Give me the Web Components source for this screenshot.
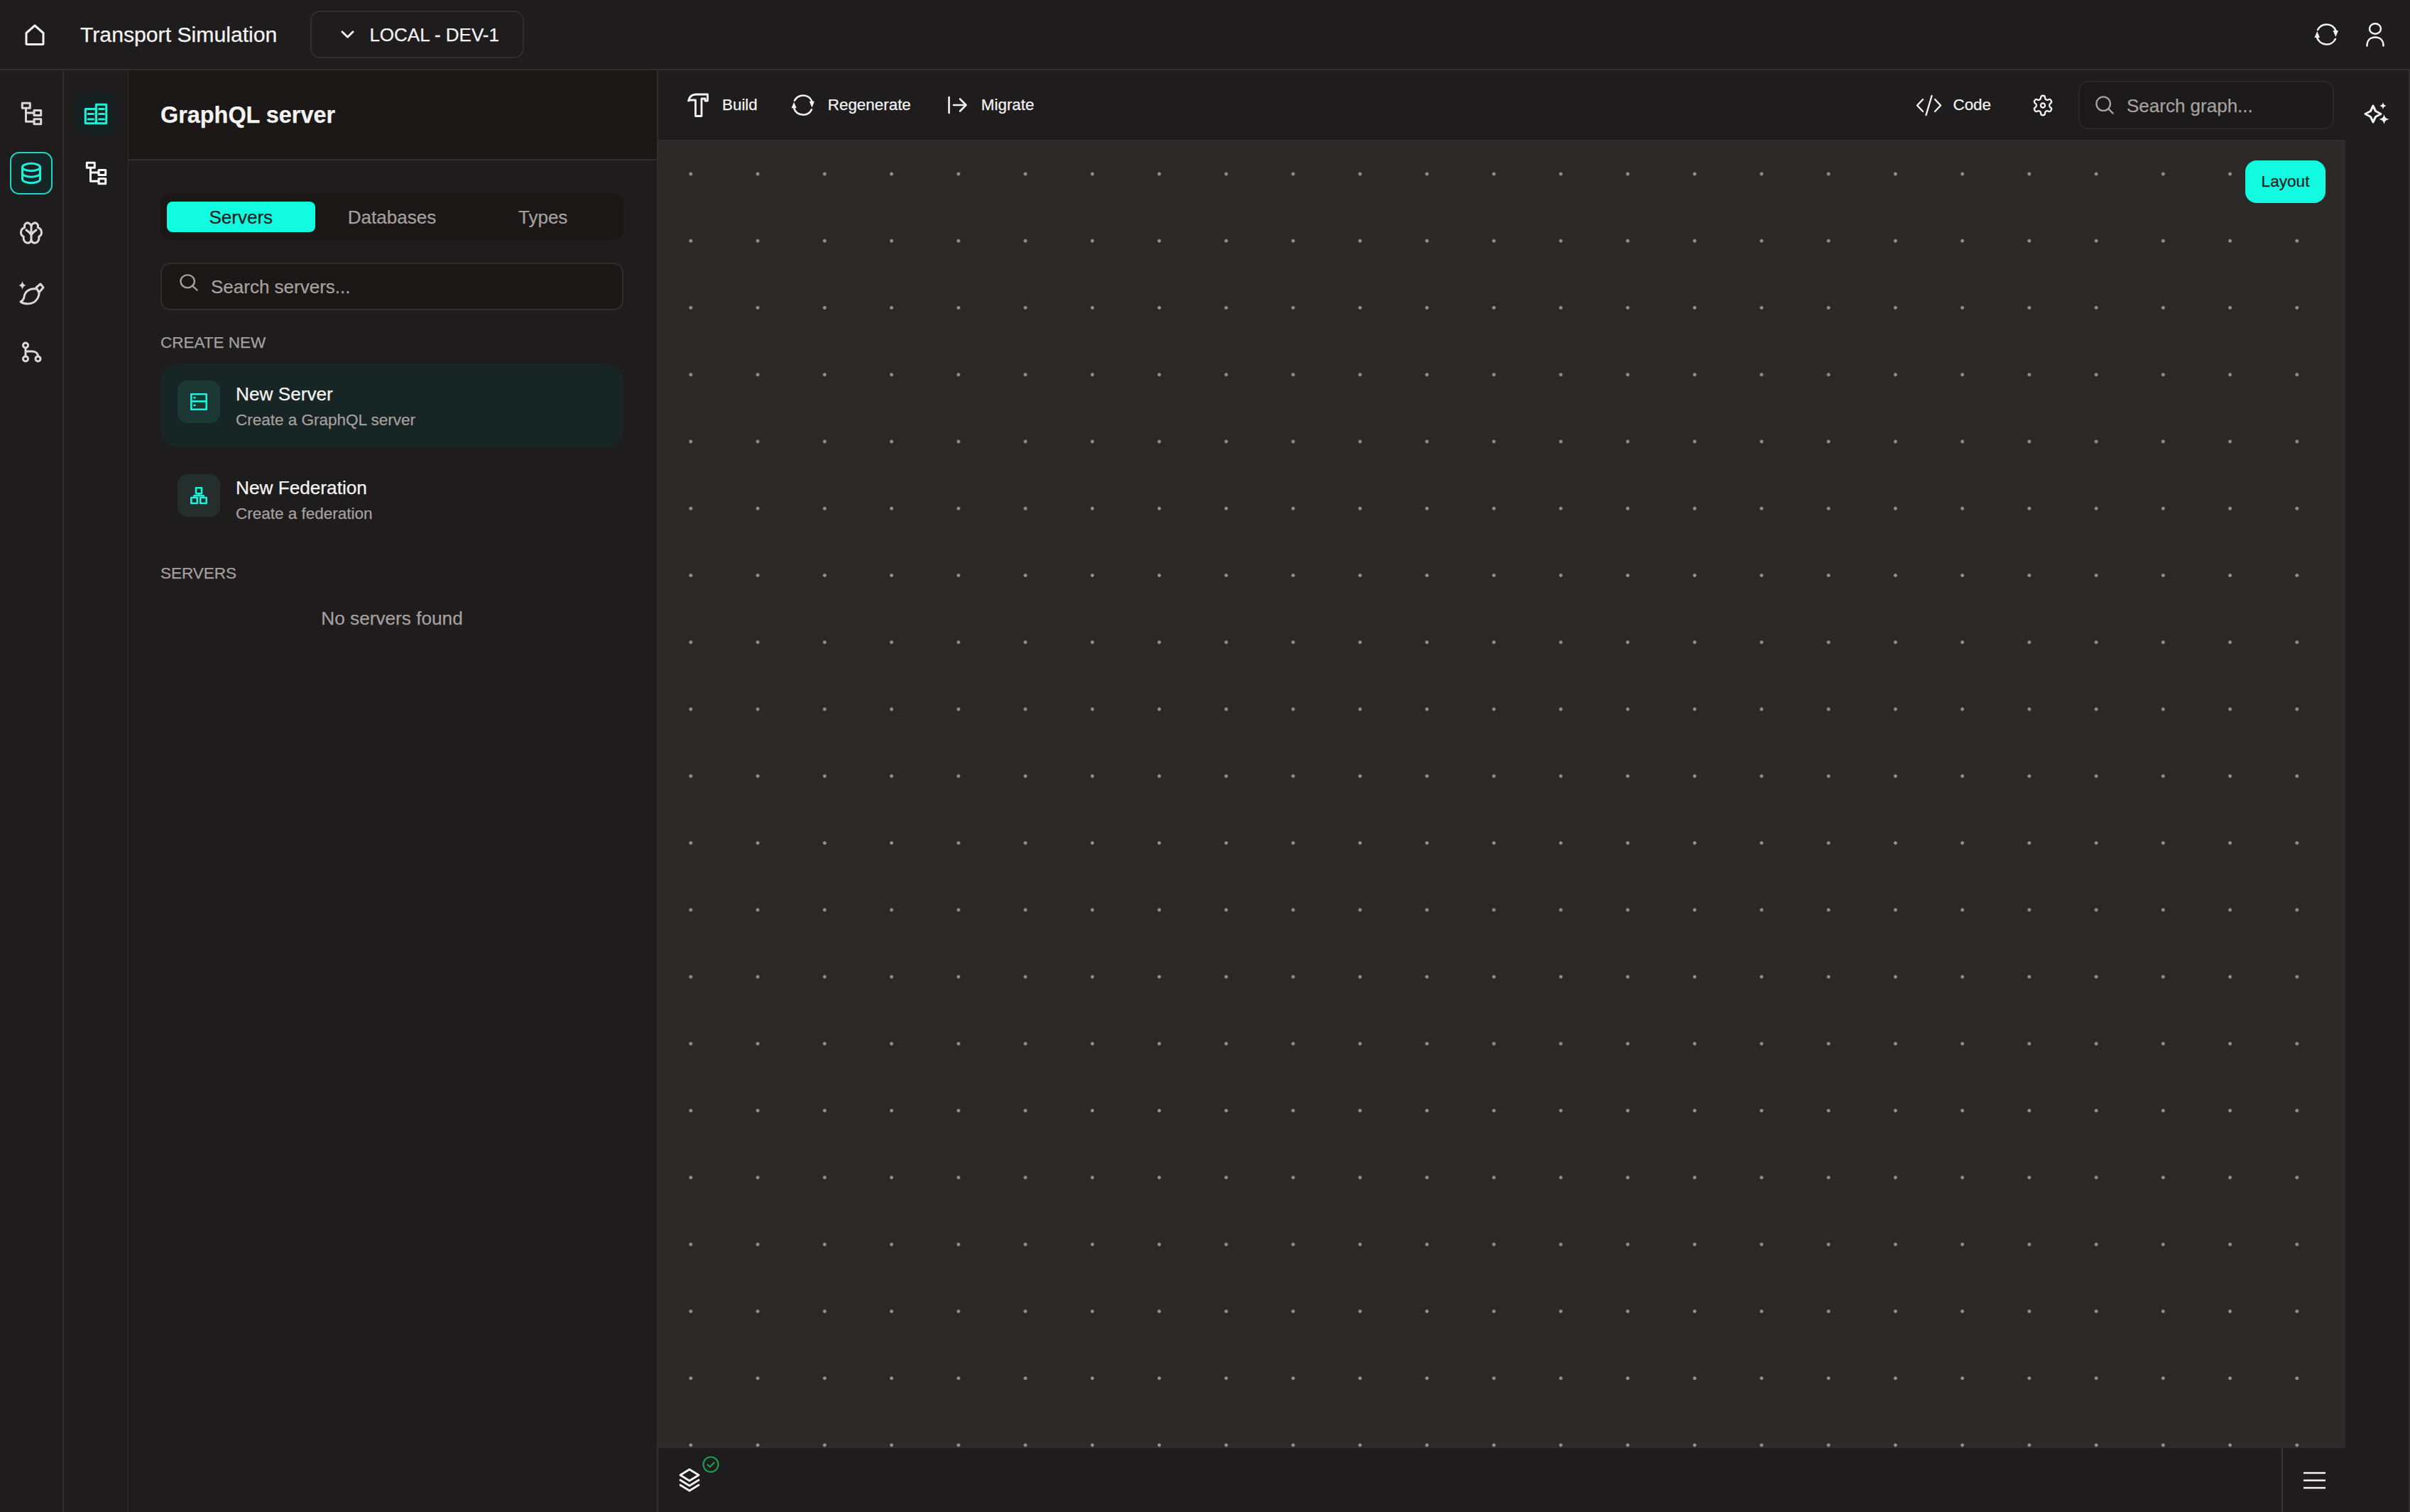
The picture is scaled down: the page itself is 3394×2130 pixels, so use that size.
<!DOCTYPE html>
<html>
<head>
<meta charset="utf-8">
<title>Transport Simulation</title>
<style>
    :root {
        --bg: #1e1c1d;
        --bg-deep: #1a1716;
        --line: #2f2d2d;
        --canvas: #2b2827;
        --text: #f4f3f3;
        --muted: #a5a09f;
        --accent: #12fbe0;
    }
    html, body {
        margin: 0;
        height: 100%;
        overflow: hidden;
        background: var(--bg);
        color: var(--text);
        font-family: "Liberation Sans", Arial, sans-serif;
        -webkit-text-stroke: 0.25px;
    }
</style>
</head>
<body>
<app-shell></app-shell>
<script>
const ICONS = {
    home: ['0 0 30 30', '<path d="M3 12.500 15 2l12 10.500v15a1 1 0 0 1-1 1H4a1 1 0 0 1-1-1z"/>'],
    chevron: ['0 0 20 12', '<path d="M2 2l8 8 8-8"/>'],
    sync: ['0 0 33 33', '<path d="M4.100 10A14 14 0 0 1 29.400 11"/><path d="M28.900 23A14 14 0 0 1 3.200 21"/><path fill="currentColor" stroke="none" d="M25.500 11H33l-3.600 9zM-.5 21H7l-3.800-9z"/>'],
    user: ['0 0 26 33', '<ellipse cx="13" cy="8.500" rx="8" ry="7.200"/><path d="M1.500 32.500C1.500 25 6 20.500 13 20.500s11.500 4.500 11.500 12"/>'],
    tree: ['0 0 29 32', '<rect x="1.300" y="1.300" width="11" height="7"/><rect x="18" y="11.500" width="9.700" height="7"/><rect x="18" y="23.700" width="9.700" height="7"/><path d="M6.500 8.300v19h11.500M6.500 15h11.500"/>'],
    database: ['0 0 28 30', '<ellipse cx="14" cy="6.500" rx="12.500" ry="5.200"/><path d="M1.500 6.500v17c0 2.900 5.600 5.200 12.500 5.200s12.500-2.300 12.500-5.200v-17"/><path d="M1.500 15c0 2.900 5.600 5.200 12.500 5.200s12.500-2.300 12.500-5.200"/>'],
    brain: ['0 0 32 32', '<path d="M16 6.500C15 2.500 10.500.500 8 3 6.300 4.500 6.200 6.800 6.800 8.500 3.300 9.500 1.500 12.500 1.500 15.500c0 2.800 1.600 5 3.800 5.800-.800 3.500.700 7.700 4.200 8.700 3 .800 5.500-.700 6.500-3.500 1 2.800 3.500 4.300 6.500 3.500 3.500-1 5-5.200 4.200-8.700 2.200-.800 3.800-3 3.800-5.800 0-3-1.800-6-5.300-7C25.800 6.800 25.700 4.500 24 3 21.500.500 17 2.500 16 6.500z"/><path d="M16 7v19.500M9 12l5 4M23 12l-5 4"/><path fill="currentColor" stroke="none" d="M16 13l3.500 4-3.500 4-3.500-4z"/>'],
    planet: ['0 0 36 33', '<path fill="currentColor" stroke="none" d="M5.500 0c.8 3.600 2 5.200 5.500 6-3.500.8-4.700 2.400-5.500 6C4.700 8.400 3.500 6.800 0 6c3.500-.8 4.700-2.400 5.500-6z"/><path d="M25 11C15 10 9 15 8 22c-.5 4-3 6-5 7 5 4 16 4 21-1s6-11 4-14"/><path d="M25 9l6-5 4 5-6 7z"/>'],
    branch: ['0 0 28 28', '<circle cx="6" cy="4.500" r="3.500"/><circle cx="6" cy="23.500" r="3.500"/><circle cx="23.500" cy="23.500" r="3.500"/><path d="M6 8v12M6 13h9c5 0 8.500 2.500 8.500 7"/>'],
    buildings: ['0 0 32 29', '<rect x="1.300" y="7.500" width="15" height="20.200"/><rect x="16.300" y="1.300" width="14.400" height="26.400"/><path d="M5 14.500h7.500M5 22h7.500M20.500 7.500h7M20.500 14.500h7M20.500 22h7"/>'],
    server: ['0 0 24 24', '<rect x="1.300" y="1.300" width="21.400" height="10"/><rect x="1.300" y="11.300" width="21.400" height="11.400"/><path d="M5.500 6.300h1M5.500 17h1"/>'],
    federation: ['0 0 24 24', '<rect x="8" y="1.300" width="8" height="8"/><rect x="1.300" y="15" width="8.500" height="8"/><rect x="14.200" y="15" width="8.500" height="8"/><path d="M12 9.300v3M5.500 15v-2.700h13V15"/>'],
    search: ['0 0 28 28', '<circle cx="12" cy="12" r="10.500"/><path d="M19.800 19.800 26.500 26.500"/>'],
    hammer: ['0 0 30 34', '<path d="M1.500 11C3 5 7 2 12 2h16.500v9H25V8h-5v24.500h-8.500V10H4z"/>'],
    migrate: ['0 0 27 24', '<path d="M1.500 1v22M8 12h17M17 3.500l8.500 8.500-8.500 8.500"/>'],
    code: ['0 0 37 29', '<path d="M10 6 2 14.500 10 23M27 6l8 8.500L27 23M22.500 1 14.500 28"/>'],
    gear: ['0 0 24 24', '<path d="M12.220 2h-.44a2 2 0 0 0-2 2v.18a2 2 0 0 1-1 1.730l-.43.25a2 2 0 0 1-2 0l-.15-.08a2 2 0 0 0-2.730.73l-.22.38a2 2 0 0 0 .73 2.730l.15.1a2 2 0 0 1 1 1.720v.51a2 2 0 0 1-1 1.740l-.15.09a2 2 0 0 0-.73 2.730l.22.38a2 2 0 0 0 2.730.73l.15-.08a2 2 0 0 1 2 0l.43.25a2 2 0 0 1 1 1.730V20a2 2 0 0 0 2 2h.44a2 2 0 0 0 2-2v-.18a2 2 0 0 1 1-1.730l.43-.25a2 2 0 0 1 2 0l.15.08a2 2 0 0 0 2.730-.73l.22-.39a2 2 0 0 0-.73-2.730l-.15-.08a2 2 0 0 1-1-1.740v-.5a2 2 0 0 1 1-1.740l.15-.09a2 2 0 0 0 .73-2.730l-.22-.38a2 2 0 0 0-2.730-.73l-.15.08a2 2 0 0 1-2 0l-.43-.25a2 2 0 0 1-1-1.730V4a2 2 0 0 0-2-2z"/><circle cx="12" cy="12" r="2.300"/>'],
    sparkles: ['0 0 35 32', '<path d="M12 5l3.500 7.500 7.500 4-7.500 4L12 28l-3.500-7.500-7.500-4 7.500-4z"/><path fill="currentColor" stroke="none" d="M26 0c.7 3.200 1.800 4.300 5 5-3.200.7-4.300 1.800-5 5-.7-3.200-1.800-4.300-5-5 3.200-.7 4.300-1.800 5-5zM27.500 17c1 4.500 2.500 6 7 7-4.500 1-6 2.500-7 7-1-4.500-2.500-6-7-7 4.500-1 6-2.500 7-7z"/>'],
    layers: ['0 0 30 34', '<path d="M15 2l13 8-13 8-13-8zM2 17l13 8 13-8M2 24l13 8 13-8"/>'],
    check: ['0 0 24 24', '<circle cx="12" cy="12" r="10.500"/><path d="M7.500 12.500l3.200 3 6-6"/>'],
    menu: ['0 0 29 25', '<path d="M0 2h29M0 12.500h29M0 23h29"/>']
};

class AppIcon extends HTMLElement {
    constructor() {
        super();
        const shadow = this.attachShadow({ mode: 'open' });
        const [viewBox, body] = ICONS[this.getAttribute('name')];
        const w = this.getAttribute('w') || 28;
        const h = this.getAttribute('h') || 28;
        const sw = this.getAttribute('sw') || 3;
        shadow.innerHTML = `
            <style>
                :host {
                    display: block;
                    flex: none;
                    width: ${w}px;
                    height: ${h}px;
                }
                svg {
                    display: block;
                    width: 100%;
                    height: 100%;
                    overflow: visible;
                    fill: none;
                    stroke: currentColor;
                    stroke-width: ${sw};
                    stroke-linecap: round;
                    stroke-linejoin: round;
                }
            </style>
            <svg viewBox="${viewBox}" preserveAspectRatio="none">${body}</svg>
        `;
    }
}

class TopBar extends HTMLElement {
    constructor() {
        super();
        const shadow = this.attachShadow({ mode: 'open' });
        shadow.innerHTML = `
            <style>
                :host {
                    display: flex;
                    align-items: center;
                    box-sizing: border-box;
                    height: 99px;
                    padding: 0 36px 0 34px;
                    border-bottom: 2px solid var(--line);
                }
                .title {
                    margin-left: 49px;
                    font-size: 30.2px;
                    white-space: nowrap;
                }
                .env {
                    display: flex;
                    align-items: center;
                    box-sizing: border-box;
                    width: 301px;
                    height: 67px;
                    margin-left: 47px;
                    padding-left: 41px;
                    gap: 21px;
                    border: 2px solid var(--line);
                    border-radius: 14px;
                    font-size: 26px;
                }
                .env span {
                    padding-top: 2px;
                }
                .right {
                    display: flex;
                    align-items: center;
                    gap: 39px;
                    margin-left: auto;
                }
            </style>
            <app-icon name="home" w="30" h="30"></app-icon>
            <span class="title">Transport Simulation</span>
            <div class="env">
                <app-icon name="chevron" w="19" h="11" sw="3"></app-icon>
                <span>LOCAL - DEV-1</span>
            </div>
            <div class="right">
                <app-icon name="sync" w="33" h="33" sw="2.6"></app-icon>
                <app-icon name="user" w="26" h="33" sw="2.5"></app-icon>
            </div>
        `;
    }
}

class RailButton extends HTMLElement {
    constructor() {
        super();
        const shadow = this.attachShadow({ mode: 'open' });
        shadow.innerHTML = `
            <style>
                :host {
                    display: flex;
                    align-items: center;
                    justify-content: center;
                    box-sizing: border-box;
                    width: 60px;
                    height: 60px;
                    border-radius: 13px;
                    color: #d9d7d7;
                }
                :host([active]) {
                    color: #1ff0d8;
                    background: #152627;
                    border: 2px solid #1fd6c2;
                }
                :host([soft]) {
                    color: #1ff0d8;
                    background: #142120;
                    border-radius: 16px;
                }
                :host([bright]) {
                    color: #fff;
                }
            </style>
            <slot></slot>
        `;
    }
}

class IconRail extends HTMLElement {
    constructor() {
        super();
        const shadow = this.attachShadow({ mode: 'open' });
        shadow.innerHTML = `
            <style>
                :host {
                    display: flex;
                    flex-direction: column;
                    align-items: center;
                    gap: 24px;
                    box-sizing: border-box;
                    padding-top: 31px;
                    border-right: 2px solid var(--line);
                }
            </style>
            <slot></slot>
        `;
    }
}

class TabSwitch extends HTMLElement {
    constructor() {
        super();
        const shadow = this.attachShadow({ mode: 'open' });
        shadow.innerHTML = `
            <style>
                :host {
                    display: grid;
                    grid-template-columns: repeat(3, 1fr);
                    gap: 4px;
                    box-sizing: border-box;
                    height: 65px;
                    padding: 11px 9px;
                    background: var(--bg-deep);
                    border-radius: 14px;
                    font-size: 26px;
                    color: var(--muted);
                }
                span {
                    display: flex;
                    align-items: center;
                    justify-content: center;
                    padding-top: 2px;
                    border-radius: 8px;
                }
                .on {
                    background: var(--accent);
                    color: #12201f;
                }
            </style>
            <span class="on">Servers</span>
            <span>Databases</span>
            <span>Types</span>
        `;
    }
}

class SearchBox extends HTMLElement {
    constructor() {
        super();
        const shadow = this.attachShadow({ mode: 'open' });
        shadow.innerHTML = `
            <style>
                :host {
                    display: flex;
                    align-items: center;
                    gap: 18px;
                    box-sizing: border-box;
                    border: 2px solid var(--line);
                    border-radius: 14px;
                    background: var(--bg-deep);
                    color: var(--muted);
                    font-size: 26px;
                    white-space: nowrap;
                }
                span {
                    padding-top: 2px;
                }
            </style>
            <slot></slot>
            <span>${this.getAttribute('placeholder')}</span>
        `;
    }
}

class CreateCard extends HTMLElement {
    constructor() {
        super();
        const shadow = this.attachShadow({ mode: 'open' });
        shadow.innerHTML = `
            <style>
                :host {
                    display: flex;
                    gap: 22px;
                    box-sizing: border-box;
                    height: 117px;
                    padding: 23px 24px;
                    border-radius: 24px;
                }
                :host([selected]) {
                    background: #172525;
                }
                .icon {
                    display: flex;
                    align-items: center;
                    justify-content: center;
                    width: 60px;
                    height: 60px;
                    border-radius: 14px;
                    background: #242e2d;
                    color: #1ff0d8;
                }
                :host([selected]) .icon {
                    background: #1b3835;
                }
                .name {
                    margin-top: 1px;
                    font-size: 26.2px;
                    line-height: 36px;
                }
                .sub {
                    margin-top: 1px;
                    font-size: 22.5px;
                    line-height: 36px;
                    color: var(--muted);
                }
            </style>
            <div class="icon"><slot></slot></div>
            <div>
                <div class="name">${this.getAttribute('name')}</div>
                <div class="sub">${this.getAttribute('sub')}</div>
            </div>
        `;
    }
}

class SidePanel extends HTMLElement {
    constructor() {
        super();
        const shadow = this.attachShadow({ mode: 'open' });
        shadow.innerHTML = `
            <style>
                :host {
                    display: block;
                    box-sizing: border-box;
                }
                header {
                    display: flex;
                    align-items: center;
                    box-sizing: border-box;
                    height: 127px;
                    padding: 2px 0 0 45px;
                    background: var(--bg-deep);
                    border-bottom: 2px solid var(--line);
                    font-size: 32.4px;
                    font-weight: bold;
                }
                section {
                    padding: 47px 47px 0 45px;
                }
                search-box {
                    height: 67px;
                    margin-top: 32px;
                    padding: 0 0 0 25px;
                }
                search-box app-icon {
                    transform: translateY(-6px);
                }
                h4 {
                    margin: 31px 0 -1px;
                    font-size: 22.5px;
                    line-height: 30px;
                    font-weight: normal;
                    color: var(--muted);
                }
                create-card:first-of-type {
                    margin-top: 16px;
                }
                create-card + create-card {
                    margin-top: 15px;
                }
                .empty {
                    margin-top: 34px;
                    font-size: 26.2px;
                    line-height: 30px;
                    text-align: center;
                    color: var(--muted);
                }
            </style>
            <header>GraphQL server</header>
            <section>
                <tab-switch></tab-switch>
                <search-box placeholder="Search servers...">
                    <app-icon name="search" w="26" h="24" sw="2.6"></app-icon>
                </search-box>
                <h4>CREATE NEW</h4>
                <create-card selected name="New Server" sub="Create a GraphQL server">
                    <app-icon name="server" w="24" h="24" sw="2.6"></app-icon>
                </create-card>
                <create-card name="New Federation" sub="Create a federation">
                    <app-icon name="federation" w="24" h="24" sw="2.6"></app-icon>
                </create-card>
                <h4>SERVERS</h4>
                <div class="empty">No servers found</div>
            </section>
        `;
    }
}

class ToolButton extends HTMLElement {
    constructor() {
        super();
        const shadow = this.attachShadow({ mode: 'open' });
        shadow.innerHTML = `
            <style>
                :host {
                    display: flex;
                    align-items: center;
                    font-size: 22.4px;
                    white-space: nowrap;
                }
                span {
                    margin-left: var(--gap, 19px);
                }
            </style>
            <slot></slot>
            <span>${this.getAttribute('label')}</span>
        `;
    }
}

class GraphToolbar extends HTMLElement {
    constructor() {
        super();
        const shadow = this.attachShadow({ mode: 'open' });
        shadow.innerHTML = `
            <style>
                :host {
                    display: flex;
                    align-items: center;
                    box-sizing: border-box;
                    height: 100px;
                    padding: 0 16px 0 41px;
                    border-bottom: 2px solid var(--line);
                }
                .regen { margin-left: 48px; }
                .migrate { margin-left: 52px; --gap: 20px; }
                .code { margin-left: auto; --gap: 15px; }
                .gear { margin-left: 57px; }
                search-box {
                    width: 360px;
                    height: 68px;
                    margin-left: 34px;
                    padding-left: 22px;
                    border-color: #292728;
                    background: #1b191a;
                }
            </style>
            <tool-button label="Build"><app-icon name="hammer" w="30" h="34" sw="2.8"></app-icon></tool-button>
            <tool-button class="regen" label="Regenerate"><app-icon name="sync" w="32" h="32" sw="2.6"></app-icon></tool-button>
            <tool-button class="migrate" label="Migrate"><app-icon name="migrate" w="27" h="24" sw="2.6"></app-icon></tool-button>
            <tool-button class="code" label="Code"><app-icon name="code" w="37" h="29" sw="2.4"></app-icon></tool-button>
            <app-icon class="gear" name="gear" w="32" h="33" sw="1.7"></app-icon>
            <search-box placeholder="Search graph...">
                <app-icon name="search" w="26" h="26" sw="2.6"></app-icon>
            </search-box>
        `;
    }
}

class GraphCanvas extends HTMLElement {
    constructor() {
        super();
        const shadow = this.attachShadow({ mode: 'open' });
        shadow.innerHTML = `
            <style>
                :host {
                    display: block;
                    position: relative;
                    flex: 1;
                    min-height: 0;
                    background-color: var(--canvas);
                    background-image: radial-gradient(circle, #928f8d 0, #928f8d 2px, transparent 2.8px);
                    background-size: 94.26px 94.26px;
                    background-position: -1.3px -1.1px;
                    box-shadow: inset -7px -7px 0 rgba(255, 255, 255, 0.012);
                }
                button {
                    position: absolute;
                    top: 27px;
                    right: 28px;
                    width: 113px;
                    height: 60px;
                    border: 0;
                    border-radius: 16px;
                    background: var(--accent);
                    color: #10201f;
                    font: 22.6px "Liberation Sans", Arial, sans-serif;
                    -webkit-text-stroke: 0.25px;
                }
            </style>
            <button>Layout</button>
        `;
    }
}

class StatusBar extends HTMLElement {
    constructor() {
        super();
        const shadow = this.attachShadow({ mode: 'open' });
        shadow.innerHTML = `
            <style>
                :host {
                    display: flex;
                    align-items: center;
                    height: 90px;
                    padding-left: 29px;
                }
                .layers {
                    position: relative;
                }
                .badge {
                    position: absolute;
                    left: 33px;
                    top: -17px;
                    color: #1f9a52;
                }
                .menu {
                    display: flex;
                    align-items: center;
                    justify-content: center;
                    box-sizing: border-box;
                    width: 90px;
                    height: 100%;
                    margin-left: auto;
                    border-left: 2px solid #373535;
                }
            </style>
            <div class="layers">
                <app-icon name="layers" w="30" h="34" sw="2.8"></app-icon>
                <app-icon class="badge" name="check" w="24" h="24" sw="2.2"></app-icon>
            </div>
            <div class="menu"><app-icon name="menu" w="29" h="25" sw="2.5"></app-icon></div>
        `;
    }
}

class AppShell extends HTMLElement {
    constructor() {
        super();
        const shadow = this.attachShadow({ mode: 'open' });
        shadow.innerHTML = `
            <style>
                :host {
                    display: flex;
                    flex-direction: column;
                    height: 100vh;
                }
                main {
                    flex: 1;
                    min-height: 0;
                    display: grid;
                    grid-template-columns: 90px 91px 744px 1fr 91px;
                }
                .rail-two {
                    border-right-width: 1px;
                }
                .workspace {
                    display: flex;
                    flex-direction: column;
                    min-width: 0;
                    border-left: 2px solid var(--line);
                }
                .assist {
                    box-sizing: border-box;
                    padding: 45px 0 0 27px;
                    border-right: 2px solid var(--line);
                }
            </style>
            <top-bar></top-bar>
            <main>
                <icon-rail>
                    <rail-button><app-icon name="tree" w="29" h="32"></app-icon></rail-button>
                    <rail-button active><app-icon name="database" w="28" h="30"></app-icon></rail-button>
                    <rail-button><app-icon name="brain" w="32" h="32"></app-icon></rail-button>
                    <rail-button><app-icon name="planet" w="36" h="33"></app-icon></rail-button>
                    <rail-button><app-icon name="branch" w="28" h="28"></app-icon></rail-button>
                </icon-rail>
                <icon-rail class="rail-two">
                    <rail-button soft><app-icon name="buildings" w="32" h="29"></app-icon></rail-button>
                    <rail-button bright><app-icon name="tree" w="29" h="32"></app-icon></rail-button>
                </icon-rail>
                <side-panel></side-panel>
                <div class="workspace">
                    <graph-toolbar></graph-toolbar>
                    <graph-canvas></graph-canvas>
                    <status-bar></status-bar>
                </div>
                <div class="assist"><app-icon name="sparkles" w="35" h="32"></app-icon></div>
            </main>
        `;
    }
}

customElements.define('app-icon', AppIcon);
customElements.define('top-bar', TopBar);
customElements.define('rail-button', RailButton);
customElements.define('icon-rail', IconRail);
customElements.define('tab-switch', TabSwitch);
customElements.define('search-box', SearchBox);
customElements.define('create-card', CreateCard);
customElements.define('side-panel', SidePanel);
customElements.define('tool-button', ToolButton);
customElements.define('graph-toolbar', GraphToolbar);
customElements.define('graph-canvas', GraphCanvas);
customElements.define('status-bar', StatusBar);
customElements.define('app-shell', AppShell);
</script>
</body>
</html>
